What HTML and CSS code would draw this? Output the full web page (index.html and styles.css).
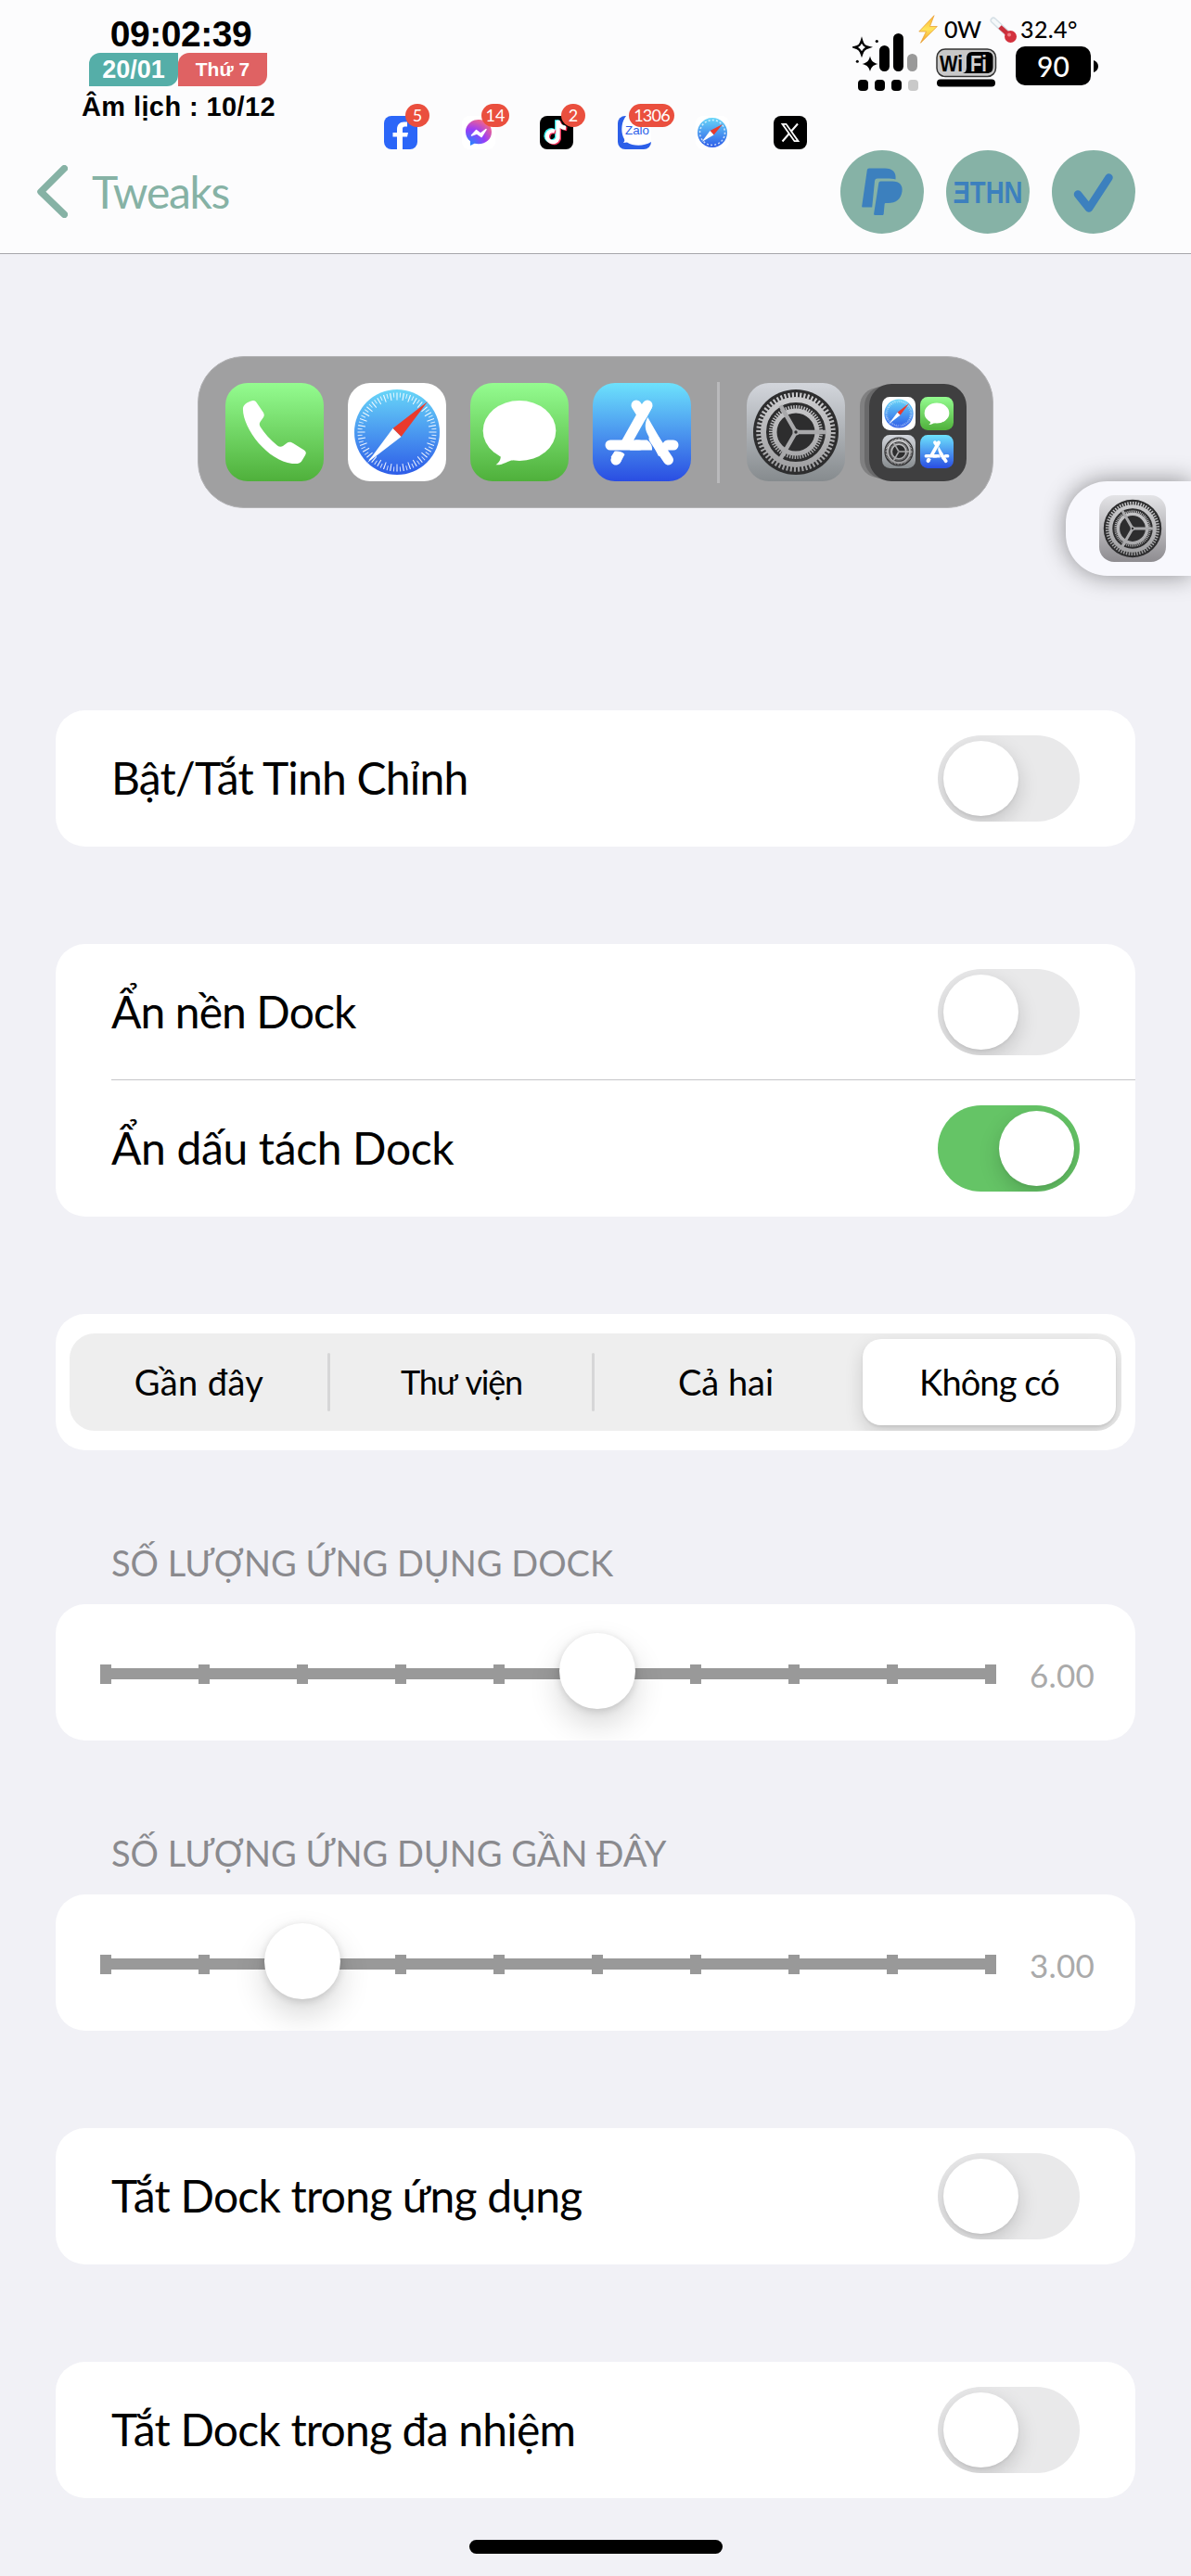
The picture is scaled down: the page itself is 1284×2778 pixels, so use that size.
FILE: index.html
```html
<!DOCTYPE html>
<html lang="vi">
<head>
<meta charset="utf-8">
<title>Tweaks</title>
<link rel="stylesheet" href="styles.css">
</head>
<body>
<svg class="defs" aria-hidden="true">
  <defs>
    <linearGradient id="g-green" x1="0" y1="0" x2="0" y2="1"><stop offset="0" stop-color="#94fc90"/><stop offset="1" stop-color="#4fb03b"/></linearGradient>
    <linearGradient id="g-compass" x1="0" y1="0" x2="0" y2="1"><stop offset="0" stop-color="#68d6f8"/><stop offset="1" stop-color="#2d5ce8"/></linearGradient>
    <linearGradient id="g-store" x1="0" y1="0" x2="0" y2="1"><stop offset="0" stop-color="#6de2fc"/><stop offset="1" stop-color="#2a4de2"/></linearGradient>
    <linearGradient id="g-steel" x1="0" y1="0" x2="0" y2="1"><stop offset="0" stop-color="#d3d6dc"/><stop offset="1" stop-color="#868b8e"/></linearGradient>
    <linearGradient id="g-silver" x1="0" y1="0" x2="0" y2="1"><stop offset="0" stop-color="#e4e4e7"/><stop offset="1" stop-color="#8e8c90"/></linearGradient>
    <linearGradient id="g-ring" gradientUnits="userSpaceOnUse" x1="0" y1="8" x2="0" y2="98"><stop offset="0" stop-color="#d0d0d2"/><stop offset="1" stop-color="#9c9c9e"/></linearGradient>
    <radialGradient id="g-msgr" cx=".15" cy="1" r="1.15"><stop offset="0" stop-color="#1a8cff"/><stop offset=".55" stop-color="#9a3cf8"/><stop offset="1" stop-color="#ff6b7a"/></radialGradient>
    <linearGradient id="g-bolt" x1="0" y1="0" x2="0" y2="1"><stop offset="0" stop-color="#ffb02e"/><stop offset=".5" stop-color="#ffe45c"/><stop offset="1" stop-color="#f59a23"/></linearGradient>

    <symbol id="compass" viewBox="0 0 106 106">
      <circle cx="53" cy="53" r="46" fill="url(#g-compass)"/>
      <circle cx="53" cy="53" r="38.5" fill="none" stroke="#fff" stroke-opacity=".9" stroke-width="8" pathLength="360" stroke-dasharray="1.6 8.4" stroke-dashoffset=".8"/>
      <circle cx="53" cy="53" r="40" fill="none" stroke="#fff" stroke-opacity=".75" stroke-width="5" pathLength="360" stroke-dasharray="1.5 8.5" stroke-dashoffset="5.8"/>
      <path d="M86 20 48.5 49 57.5 58Z" fill="#ea3a2c"/>
      <path d="M21 86 48.5 49 57.5 58Z" fill="#fff"/>
    </symbol>
    <symbol id="safari" viewBox="0 0 106 106"><rect width="106" height="106" rx="24" fill="#fff"/><use href="#compass"/></symbol>
    <symbol id="messages" viewBox="0 0 106 106">
      <rect width="106" height="106" rx="24" fill="url(#g-green)"/>
      <ellipse cx="53" cy="51.5" rx="39.3" ry="32.6" fill="#fff"/>
      <path d="M32.5 77C33.5 82 31.5 85.5 27.5 88.3 35 89 41 83.500 46 83.200L50 78Z" fill="#fff"/>
    </symbol>
    <symbol id="phone" viewBox="0 0 106 106">
      <rect width="106" height="106" rx="24" fill="url(#g-green)"/>
      <path d="M28.500 19.200C24 20.500 19 23 18.900 28 19 50 46 84 72 87 79 87.500 81 86.500 83 83L86 78C87.500 75.500 87 74 85 72.500L73 65C70 63.200 68 63.500 66 65L62 68C60 69.200 58 69 56 67.500 48 61 42 54 37.500 47 36.500 45 36.500 43.500 37.500 42L41 37C42 35.500 42 34 41 32L33.500 21C32.300 19.200 30.500 18.700 28.500 19.200Z" fill="#fff"/>
    </symbol>
    <symbol id="store" viewBox="0 0 106 106">
      <rect width="106" height="106" rx="24" fill="url(#g-store)"/>
      <g fill="none" stroke="#fff" stroke-width="11" stroke-linecap="round">
        <path d="M47 24 52 32M59 24 53 35"/>
        <path d="M59 24 36 65" stroke-linecap="butt"/>
        <path d="M81 67H87M19 67H50M66 60 81.500 83M25 83 26 81"/>
      </g>
      <path d="M46 61.500H58.500C62 64 64.500 67 64 72.500H40ZM59.300 37C56 43 56 49 59 55L71 79 80.500 74ZM23.500 73.800C27 73.200 31.500 74 34.500 77L29.500 86.500 19.500 80Z" fill="#fff"/>
    </symbol>
    <symbol id="gear" viewBox="0 0 106 106">
      <circle cx="53" cy="53" r="46" fill="#2d2d2e"/>
      <g fill="none" stroke="url(#g-ring)">
        <circle cx="53" cy="53" r="40" stroke-width="5.500" pathLength="360" stroke-dasharray="3 3"/>
        <circle cx="53" cy="53" r="35" stroke-width="6"/>
        <circle cx="53" cy="53" r="27" stroke-width="4" pathLength="360" stroke-dasharray="3 3"/>
        <circle cx="53" cy="53" r="23" stroke-width="5"/>
        <path d="M53 53H86M53 53 36.500 24.400M53 53 36.500 81.600" stroke="#a9a9ab" stroke-width="4.500"/>
      </g>
      <circle cx="53" cy="53" r="3.600" fill="#a9a9ab"/>
      <circle cx="53" cy="53" r="1.700" fill="#2d2d2e"/>
    </symbol>
    <symbol id="settings" viewBox="0 0 106 106"><rect width="106" height="106" rx="24" fill="url(#g-steel)"/><use href="#gear"/></symbol>
  </defs>
</svg>

<header class="header">
  <div class="status">
    <div class="clock">
      <div class="time">09:02:39</div>
      <div class="pills"><span class="pill date">20/01</span><span class="pill day">Thứ 7</span></div>
      <div class="lunar">Âm lịch : 10/12</div>
    </div>

    <div class="apps">
      <div class="app">
        <svg viewBox="0 0 36 36"><rect width="36" height="36" rx="8" fill="#2b66f8"/><path d="M14 36V22.500H9.500V18H14V14.500C14 9.500 17 6.500 21.500 6.500H25V11.500H22.500C20.500 11.500 20 12.500 20 14V18H26L25 22.500H20V36Z" fill="#fff"/></svg>
        <b class="badge b5">5</b>
      </div>
      <div class="app">
        <svg viewBox="0 0 36 36"><rect width="36" height="36" rx="8" fill="#fff"/><path d="M18 4C10 4 4 9.500 4 17.200 4 21.500 6 25 9 27.300V32L13.500 29.700C24 32 32 26 32 17.200 32 9.500 26 4 18 4Z" fill="url(#g-msgr)"/><path d="M10.500 21 15.500 15.500 20 19 26 14.500 21 22.500 16 19Z" fill="#fff" stroke="#fff" stroke-width="1.500" stroke-linejoin="round"/></svg>
        <b class="badge b14">14</b>
      </div>
      <div class="app">
        <svg viewBox="0 0 36 36"><rect width="36" height="36" rx="8"/><g fill="none" stroke-width="4.300"><path d="M16 16.500A6 6 0 1 0 19.500 24V5C20 10 23 12.500 28 13" stroke="#3ee" transform="translate(-1.300 -.8)"/><path d="M16 16.500A6 6 0 1 0 19.500 24V5C20 10 23 12.500 28 13" stroke="#f4315a" transform="translate(1.300 1)"/><path d="M16 16.500A6 6 0 1 0 19.500 24V5C20 10 23 12.500 28 13" stroke="#fff"/></g></svg>
        <b class="badge b2">2</b>
      </div>
      <div class="app">
        <svg viewBox="0 0 36 36"><rect width="36" height="36" rx="8" fill="#2c5fe8"/><path d="M9 0H28A8 8 0 0 1 36 8V28C28 33 17 33 10 28.500L6 29C8 27 7.500 25.500 6 23 3 16 4 6 9 0Z" fill="#fff"/><text x="8" y="20" class="zalo" textLength="26" lengthAdjust="spacingAndGlyphs">Zalo</text></svg>
        <b class="badge b1306">1306</b>
      </div>
      <div class="app"><svg viewBox="0 0 36 36"><rect width="36" height="36" rx="8" fill="#fff"/><circle cx="18" cy="18" r="16" fill="url(#g-compass)"/><circle cx="18" cy="18" r="13.500" fill="none" stroke="#fff" stroke-opacity=".7" stroke-width="1.600" stroke-dasharray="2 2.200"/><path d="M29 9 15.500 16 19.500 20.500Z" fill="#ea3a2c"/><path d="M6.500 28 15.500 16 19.500 20.500Z" fill="#fff"/></svg></div>
      <div class="app"><svg viewBox="0 0 36 36"><rect width="36" height="36" rx="8"/><path d="M26 8.500 9.500 27.500" stroke="#fff" stroke-width="2"/><path d="M9.500 8.800H13.500L26.500 27.200H22.500Z" fill="#000" stroke="#fff" stroke-width="1.800"/></svg></div>
    </div>

    <svg class="signal" viewBox="0 0 71 62">
      <rect x="29" y="13" width="11" height="28" rx="5.500"/><rect x="44" y="0" width="11" height="41" rx="5.500"/><rect x="59" y="22" width="11" height="19" rx="5.500" fill="#999"/>
      <rect x="6" y="50" width="11" height="12" rx="4"/><rect x="24" y="50" width="11" height="12" rx="4"/><rect x="42" y="50" width="11" height="12" rx="4"/><rect x="60" y="50" width="11" height="12" rx="4" fill="#c9c9c9"/>
      <path d="M10 7.500C11.500 12.500 13 14 17.500 15 13 16.500 11.500 18 10 22.500 8.500 18 7 16.500 2.500 15 7 14 8.500 12.500 10 7.500Z" fill="none" stroke="#000" stroke-width="2.400"/>
      <path d="M19 24.500C20.500 30 22 31.500 27.500 33 22 34.500 20.500 36 19 41 17.500 36 16 34.500 10.500 33 16 31.500 17.500 30 19 24.500Z"/>
      <circle cx="26.300" cy="8.500" r="1.600"/><circle cx="5.300" cy="30.300" r="1.500"/>
    </svg>

    <div class="power">
      <div class="readings">
        <svg class="bolt" viewBox="0 0 21 31"><path d="M17 .7 .8 18H8.500L2.500 30.300 20.300 12.500H12.500Z" fill="url(#g-bolt)" stroke="#e9a23b" stroke-width=".8"/></svg>
        <span class="watt">0W</span>
        <svg class="thermo" viewBox="0 0 30 30"><path d="M4 5 20 20" stroke="#d6e0e6" stroke-width="7" stroke-linecap="round"/><path d="M4 5 14 14" stroke="#f5f8fa" stroke-width="4" stroke-linecap="round" stroke-dasharray="2 1.500"/><path d="M11 12 21 21" stroke="#c9303c" stroke-width="5"/><circle cx="22.500" cy="22.500" r="6.500" fill="#d3313d"/><circle cx="21" cy="20.500" r="2" fill="#f08088"/></svg>
        <span class="temp">32.4°</span>
      </div>
      <div class="meters">
        <svg class="wifi" viewBox="0 0 66 42">
          <rect x="1" y="1" width="63.500" height="29.500" rx="9" fill="#c8c8c8" stroke="#333" stroke-width="1.500"/>
          <path d="M29 27C33 26 33 23 33 19V11C33 7 35 4 39 4H55C59 4 61.500 6 61.500 10V20C61.500 25 59 27 55 27Z"/>
          <text x="4" y="24.500" class="wi" textLength="25" lengthAdjust="spacingAndGlyphs">Wi</text>
          <text x="37" y="24.500" class="fi" textLength="18" lengthAdjust="spacingAndGlyphs">Fi</text>
          <rect x="1" y="33.500" width="63" height="8" rx="4"/>
        </svg>
        <div class="battery">90</div>
        <svg class="nub" viewBox="0 0 5 13"><path d="M0 0C3 .8 5 3.500 5 6.500S3 12.200 0 13Z"/></svg>
      </div>
    </div>
  </div>

  <nav class="nav">
    <svg class="back" viewBox="0 0 33 57"><path d="M29.300 3.700 4 28.800 29.300 53.300" fill="none" stroke="#86b2a5" stroke-width="7.500" stroke-linecap="round" stroke-linejoin="round"/></svg>
    <span class="title">Tweaks</span>
    <div class="actions">
      <svg viewBox="0 0 90 90"><circle cx="45" cy="45" r="45" fill="#86b2a6"/><g fill="#3c80be"><path d="M31 19.500H48C56 19.500 60.500 23.500 59.500 31.500 57 30.700 54 30.500 50 30.500H40C38 30.500 37.300 31.500 37 33.500L34.200 61.500H24.300C23.500 61.500 23 61 23.200 60.200L28.800 21.500C29 20.200 29.700 19.500 31 19.500Z"/><path d="M43.500 33.500H56C64 33.500 67.500 38 66.500 44.500 65.500 52.500 60 57 51.500 57H49C48 57 47.700 57.500 47.600 58.500L46.700 68.500C46.600 69.600 46 70 45 70H37.200C36.300 70 36 69.500 36.100 68.600L41.300 35.500C41.500 34.200 42.200 33.500 43.500 33.500Z"/></g></svg>
      <svg viewBox="0 0 90 90"><circle cx="45" cy="45" r="45" fill="#86b2a6"/><text x="7.500" y="57" class="ethn" textLength="75" lengthAdjust="spacingAndGlyphs">ƎTHN</text></svg>
      <svg viewBox="0 0 90 90"><circle cx="45" cy="45" r="45" fill="#86b2a6"/><path d="M28 47.500 40 62.500 61.500 29.500" fill="none" stroke="#3c80be" stroke-width="8.500" stroke-linecap="round" stroke-linejoin="round"/></svg>
    </div>
  </nav>
</header>

<main class="content">
  <div class="dock">
    <svg class="icon"><use href="#phone"/></svg>
    <svg class="icon"><use href="#safari"/></svg>
    <svg class="icon"><use href="#messages"/></svg>
    <svg class="icon"><use href="#store"/></svg>
    <span class="dock-sep"></span>
    <svg class="icon"><use href="#settings"/></svg>
    <div class="folder">
      <svg><use href="#safari"/></svg><svg><use href="#messages"/></svg>
      <svg><use href="#settings"/></svg><svg><use href="#store"/></svg>
    </div>
  </div>

  <section class="card"><div class="row"><span class="t1">Bật/Tắt Tinh Chỉnh</span><i class="toggle"></i></div></section>

  <section class="card">
    <div class="row"><span class="t2">Ẩn nền Dock</span><i class="toggle"></i></div>
    <div class="row divided"><span class="t3">Ẩn dấu tách Dock</span><i class="toggle on"></i></div>
  </section>

  <section class="card segments">
    <div class="segmented">
      <span class="s1">Gần đây</span><span class="s2">Thư viện</span><span class="s3">Cả hai</span><span class="s4 selected">Không có</span>
    </div>
  </section>

  <h2>SỐ LƯỢNG ỨNG DỤNG DOCK</h2>
  <section class="card slider-card">
    <div class="slider"><i></i><i></i><i></i><i></i><i></i><i></i><i></i><i></i><i></i><i></i><b class="knob" style="--step:5"></b></div>
    <span class="value">6.00</span>
  </section>

  <h2>SỐ LƯỢNG ỨNG DỤNG GẦN ĐÂY</h2>
  <section class="card slider-card">
    <div class="slider"><i></i><i></i><i></i><i></i><i></i><i></i><i></i><i></i><i></i><i></i><b class="knob" style="--step:2"></b></div>
    <span class="value">3.00</span>
  </section>

  <section class="card"><div class="row"><span class="t4">Tắt Dock trong ứng dụng</span><i class="toggle"></i></div></section>
  <section class="card"><div class="row"><span class="t5">Tắt Dock trong đa nhiệm</span><i class="toggle"></i></div></section>
</main>

<aside class="floating"><svg viewBox="0 0 106 106"><rect width="106" height="106" rx="24" fill="url(#g-silver)"/><use href="#gear"/></svg></aside>
<div class="home"></div>
</body>
</html>
```
FILE: styles.css
```css
* { box-sizing: border-box; }
body {
  margin: 0; width: 1284px; height: 2778px; overflow: hidden; position: relative;
  background: #f1f1f6; color: #000;
  font-family: Lato, "Noto Sans", sans-serif; font-size: 48px;
}
svg { display: block; flex: none; }
.defs { position: absolute; width: 0; height: 0; }

/* header */
.header { height: 274px; background: #fcfcfd; border-bottom: 1px solid #a6a6ab; }
.status { display: flex; align-items: flex-start; height: 162px; padding-left: 88px; }
.clock { width: 209px; display: flex; flex-direction: column; align-items: center; font-family: "Liberation Sans", sans-serif; font-weight: bold; white-space: nowrap; }
.time { margin-top: 16px; line-height: 41px; font-size: 39px; letter-spacing: -.45px; padding-left: 5px; }
.pills { display: flex; margin-right: 1px; }
.pill { width: 96px; height: 36px; line-height: 36px; text-align: center; color: #fff; border-radius: 12px 0; }
.date { background: #55aea8; font-size: 27px; }
.day { background: #df6263; font-size: 21px; }
.lunar { line-height: 44px; font-size: 29px; letter-spacing: .4px; }

.apps { display: flex; gap: 48px; margin: 125px 0 0 117px; }
.app { position: relative; width: 36px; height: 36px; }
.app svg { width: 36px; height: 36px; }
.badge { position: absolute; top: -13px; height: 25px; border-radius: 13px; background: #ea4f3e; color: #fff; font-weight: normal; font-size: 18px; line-height: 25px; text-align: center; }
.b5, .b2 { left: 23px; width: 26px; }
.b14 { left: 21px; width: 30px; }
.b1306 { left: 12px; width: 49px; letter-spacing: -.8px; }
.zalo { font: 13px "Liberation Sans", sans-serif; fill: #2c5fe8; }

.signal { width: 71px; height: 62px; margin: 36px 0 0 49px; }
.power { margin-top: 15px; }
.readings { display: flex; align-items: center; height: 33px; font-size: 25px; line-height: 33px; font-weight: 500; }
.bolt { width: 21px; height: 31px; }
.watt { width: 56px; padding-left: 7px; letter-spacing: -.6px; }
.thermo { width: 30px; height: 30px; }
.temp { padding-left: 3px; letter-spacing: .4px; }
.meters { display: flex; padding: 4px 0 0 19px; }
.wifi { width: 66px; height: 42px; }
.wi, .fi { font: bold 24px "Liberation Sans", sans-serif; }
.fi { fill: #d0d0d0; }
.battery { width: 81px; height: 42px; margin: -2px 3px 0 20px; border-radius: 10px; background: #000; color: #fff; font-size: 30px; line-height: 42px; font-weight: 500; text-align: center; }
.nub { width: 5px; height: 13px; margin-top: 13px; }

.nav { display: flex; padding: 0 60px 0 40px; }
.back { width: 33px; height: 57px; margin-top: 16px; }
.title { margin-left: 26px; line-height: 90px; font-size: 48px; letter-spacing: -1.3px; color: #86b2a5; }
.actions { display: flex; gap: 24px; margin-left: auto; }
.actions svg { width: 90px; height: 90px; }
.ethn { font: bold 33px "Liberation Sans", "DejaVu Sans", sans-serif; fill: #3c80be; }

/* dock preview */
.content { padding: 110px 60px 0; }
.dock { display: flex; align-items: center; width: 858px; height: 164px; margin: 0 auto 218px 153px; padding: 0 0 0 29px; border-radius: 50px; background: #a0a0a1; border: 1px solid #b2b2b4; }
.icon { width: 106px; height: 106px; margin-right: 26px; }
.dock-sep { width: 3px; height: 109px; margin: 0 29px 0 2px; background: #b9b9bb; }
.folder { display: grid; grid-template-columns: 36px 36px; gap: 5px; align-content: center; justify-content: center; width: 105px; height: 105px; border-radius: 24px; background: #3f3f40; box-shadow: -7px 0 0 -2px #69696a, -14px 0 0 -4px #808081; }
.folder svg { width: 36px; height: 36px; }

/* settings cards */
.card { overflow: hidden; margin-bottom: 105px; border-radius: 32px; background: #fff; }
.row { position: relative; display: flex; align-items: center; justify-content: space-between; height: 147px; padding: 0 60px; white-space: nowrap; }
.row span { padding-bottom: 3px; }
.divided::before { content: ""; position: absolute; top: -1px; left: 60px; right: 0; height: 1px; background: #c6c6c8; }
.t1 { letter-spacing: -.8px; }
.t2 { letter-spacing: -.9px; }
.t3 { letter-spacing: -.35px; }
.t4 { letter-spacing: -.78px; }
.t5 { letter-spacing: -.8px; }

.toggle { position: relative; width: 153px; height: 93px; border-radius: 47px; background: #e9e9ea; overflow: hidden; }
.toggle::after { content: ""; position: absolute; top: 6px; left: 6px; width: 81px; height: 81px; border-radius: 50%; background: #fff; box-shadow: 0 8px 22px rgba(0, 0, 0, .17), 0 2px 3px rgba(0, 0, 0, .05); }
.toggle.on { background: #65c466; }
.toggle.on::after { left: 66px; }

.segments { padding: 21px 15px; margin-bottom: 0; }
.segmented { display: grid; grid-template-columns: 281px 285px 285px 283px; height: 105px; border-radius: 27px; background: #eee; font-size: 38px; line-height: 105px; text-align: center; overflow: hidden; }
.segmented span { position: relative; white-space: nowrap; }
.s2::before, .s3::before { content: ""; position: absolute; left: -2px; top: 21px; width: 3px; height: 63px; border-radius: 2px; background: #d6d6d7; }
.s1 { letter-spacing: .4px; }
.segmented .s1, .segmented .s2, .segmented .s3 { right: 1px; }
.s2 { font-size: 36px; letter-spacing: -1.2px; word-spacing: 3px; }
.s4 { letter-spacing: -.9px; }
.segmented .selected { margin: 6px 6px 6px 4px; border-radius: 20px; background: #fff; line-height: 93px; box-shadow: 0 8px 20px rgba(0, 0, 0, .14), 0 2px 3px rgba(0, 0, 0, .08); }

h2 { margin: 0; height: 166px; padding: 98px 0 0 60px; font-size: 38px; font-weight: normal; line-height: 46px; color: #8a8a8e; white-space: nowrap; }

.slider-card { display: flex; height: 147px; padding: 65px 0 0 48px; }
.slider-card:has(+ h2) { margin-bottom: 0; }
.slider { position: relative; display: flex; justify-content: space-between; width: 966px; height: 21px; background: linear-gradient(#999, #999) 0 4px / 100% 12px no-repeat; }
.slider i { width: 12px; height: 21px; background: #999; }
.knob { position: absolute; top: -34px; left: calc(var(--step) * 106px - 35px); width: 82px; height: 82px; border-radius: 50%; background: #fff; box-shadow: 0 16px 34px rgba(0, 0, 0, .16), 0 2px 8px rgba(0, 0, 0, .14); }
.value { margin: -13px 0 0 36px; font-size: 35px; line-height: 48px; letter-spacing: .2px; color: #aaa; }

/* overlays */
.floating { position: absolute; top: 519px; right: 0; width: 135px; height: 102px; padding: 15px 0 0 36px; border-radius: 45px 0 0 45px; background: #f8f8fd; box-shadow: 0 0 26px rgba(0, 0, 0, .42); }
.floating svg { width: 72px; height: 72px; }
.home { position: absolute; left: 506px; top: 2739px; width: 273px; height: 15px; border-radius: 8px; background: #000; }
```
